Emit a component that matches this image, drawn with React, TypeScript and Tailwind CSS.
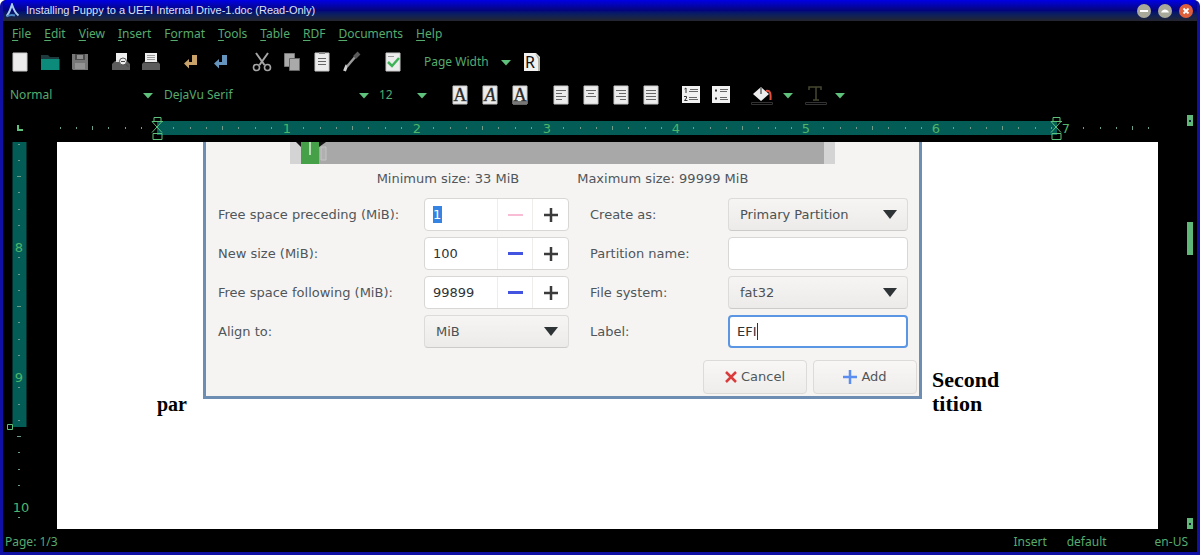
import type { ReactNode } from 'react';

const INCH = 130;

const menus = ['File', 'Edit', 'View', 'Insert', 'Format', 'Tools', 'Table', 'RDF', 'Documents', 'Help'];

const Caret = () => (
  <svg width="10" height="6" viewBox="0 0 10 6" className="pointer-events-none absolute right-[3px] top-1/2 -mt-[2px]">
    <path d="M0 0h10L5 5.500z" fill="#5fc27c" />
  </svg>
);

const ToolSelect = ({ label, value, className }: { label: string; value: string; className: string }) => (
  <div className={`relative shrink-0 ${className}`}>
    <select
      aria-label={label}
      defaultValue={value}
      className="h-6 w-full appearance-none bg-transparent text-[#56ab6e] focus:outline-none"
    >
      <option>{value}</option>
    </select>
    <Caret />
  </div>
);

const Tool = ({ label, children }: { label: string; children: ReactNode }) => (
  <button type="button" aria-label={label} className="flex h-7 w-[30px] shrink-0 items-center justify-center">
    <svg width="22" height="22" viewBox="0 0 22 22" fill="none">
      {children}
    </svg>
  </button>
);

const Sheet = () => <path d="M4 2h14v18H4z" fill="#ececec" stroke="#c9c9c9" />;

const Lines = ({ rows }: { rows: number[][] }) => (
  <>
    {rows.map(([x1, x2, y]) => (
      <path key={y} d={`M${x1} ${y}.5H${x2}`} stroke="#666" />
    ))}
  </>
);

const TitleBar = () => (
  <header className="flex h-[21px] items-center bg-linear-to-b from-[#0000e6] via-[#04047c] to-[#25252f] px-[2px]">
    <svg width="15" height="15" viewBox="0 0 15 15" fill="none">
      <path d="M1.500 13C4.500 10 5.500 5.500 7 1.500c1.500 4.500 3 8.500 6.500 11" stroke="#a9cdf0" strokeWidth="2" />
      <path d="M1.500 13.500c3.500-2 6-2 8.500-1" stroke="#4b86c5" strokeWidth="2" />
    </svg>
    <h1 className="ml-[6px] flex-1 truncate font-['Liberation_Sans',sans-serif] text-[11px] text-[#dfe2f5]">
      Installing Puppy to a UEFI Internal Drive-1.doc (Read-Only)
    </h1>
    <div className="mr-[2px] flex gap-[7px]">
      <button type="button" aria-label="Minimize">
        <svg width="14" height="14" viewBox="0 0 14 14">
          <circle cx="7" cy="7" r="7" fill="#a9a999" />
          <path d="M3 7h8" stroke="#fff" strokeWidth="2" />
        </svg>
      </button>
      <button type="button" aria-label="Maximize">
        <svg width="14" height="14" viewBox="0 0 14 14">
          <circle cx="7" cy="7" r="7" fill="#a9a999" />
          <path d="M3 8.500C4.500 4.500 9.500 4.500 11 8.500z" fill="#fff" />
        </svg>
      </button>
      <button type="button" aria-label="Close">
        <svg width="14" height="14" viewBox="0 0 14 14">
          <circle cx="7" cy="7" r="7" fill="#de5f3c" />
          <path d="M4.500 4.500l5 5m0-5l-5 5" stroke="#fff" strokeWidth="1.800" />
        </svg>
      </button>
    </div>
  </header>
);

const MenuBar = () => (
  <nav className="flex h-[25px] items-center gap-[13px] pl-[9px]">
    {menus.map((menu) => {
      const key = menu === 'Format' ? 1 : 0;
      return (
        <button key={menu} type="button">
          {menu.slice(0, key)}
          <span className="underline underline-offset-2">{menu[key]}</span>
          {menu.slice(key + 1)}
        </button>
      );
    })}
  </nav>
);

const StandardBar = () => (
  <div className="flex h-8 items-center pl-[2px]">
    <Tool label="New">
      <Sheet />
    </Tool>
    <Tool label="Open">
      <path d="M2 4h7l2 2h9v4H2z" fill="#1d3b3f" />
      <path d="M2 8h18.500v11H2z" fill="#0c8a7a" />
    </Tool>
    <Tool label="Save">
      <path d="M3 3h16v16H4l-1-1z" fill="#777" />
      <path d="M6 3h10v6H6z" fill="#4d4d4d" />
      <path d="M8 4h6v4H8z" fill="#8f8f8f" />
      <path d="M6 12h10v6H6z" fill="#939393" />
    </Tool>
    <div className="w-[11px]" />
    <Tool label="Print preview">
      <path d="M6 2h11v10H6z" fill="#eee" />
      <path d="M2 19v-6l3-3h12l3 3v6z" fill="#5c5c5c" />
      <path d="M6 9h11v2H6z" fill="#ddd" />
      <circle cx="13" cy="10.500" r="3.500" fill="#eee" stroke="#555" />
      <path d="M11 10.500h4M15.500 13l3 3" stroke="#444" />
    </Tool>
    <Tool label="Print">
      <path d="M2 19v-6l3-3h12l3 3v6z" fill="#5c5c5c" />
      <path d="M5 2h12v9H5z" fill="#eee" />
      <path d="M7 4.500h8M7 6.500h8M7 8.500h8" stroke="#999" />
      <path d="M4 11.500h14" stroke="#333" />
    </Tool>
    <div className="w-[10px]" />
    <Tool label="Undo">
      <path d="M12 4h5v10H9v3.500L4 12.500l5-4.500v3h3z" fill="#c9a26a" />
    </Tool>
    <Tool label="Redo">
      <path d="M12 4h5v10H9v3.500L4 12.500l5-4.500v3h3z" fill="#6594bf" />
    </Tool>
    <div className="w-[11px]" />
    <Tool label="Cut">
      <path d="M5 2l8.500 12M17 2L8.500 14" stroke="#a5a5a5" strokeWidth="2" />
      <circle cx="5.500" cy="16.500" r="3" stroke="#a5a5a5" strokeWidth="1.600" />
      <circle cx="16.500" cy="16.500" r="3" stroke="#a5a5a5" strokeWidth="1.600" />
    </Tool>
    <Tool label="Copy">
      <path d="M3.500 2.500h10v13h-10z" fill="#aaa" stroke="#777" />
      <path d="M8.500 7.500h10v12h-10z" fill="#aaa" stroke="#666" />
    </Tool>
    <Tool label="Paste">
      <Sheet />
      <path d="M8 2h6" stroke="#888" strokeWidth="2" />
      <Lines rows={[[7, 15, 7], [7, 15, 10], [7, 15, 13]]} />
    </Tool>
    <Tool label="Format painter">
      <path d="M3.500 20L6 14" stroke="#cfcfcf" strokeWidth="3" />
      <path d="M6 15.500L15 5" stroke="#9a9a9a" strokeWidth="2.500" />
      <path d="M13.500 6.500L18 2" stroke="#5a5a5a" strokeWidth="4" />
    </Tool>
    <div className="w-[11px]" />
    <Tool label="Spelling">
      <Sheet />
      <path d="M6 5.500h6" stroke="#999" />
      <path d="M6 11l4 4 7-8" stroke="#3fb258" strokeWidth="2.500" />
    </Tool>
    <ToolSelect label="Zoom" value="Page Width" className="ml-4 w-[90px]" />
    <div className="w-[3px]" />
    <Tool label="Revisions">
      <path d="M3 2h12l4 4v14H3z" fill="#f1f1f1" />
      <path d="M14 2l5 5v13h-2V8z" fill="#b5b5a8" />
      <text x="4" y="17" fontSize="16" fill="#111" fontFamily="Noto Sans, sans-serif">
        R
      </text>
    </Tool>
  </div>
);

const Letter = ({ italic }: { italic?: boolean }) => (
  <text
    x="11"
    y="17"
    fontSize="18"
    textAnchor="middle"
    fill="#222"
    stroke="#444"
    strokeWidth="0.400"
    fontStyle={italic ? 'italic' : 'normal'}
    fontFamily="Liberation Serif, serif"
  >
    A
  </text>
);

const FormatBar = () => (
  <div className="flex h-[34px] items-center pl-[7px]">
    <ToolSelect label="Style" value="Normal" className="w-[146px]" />
    <ToolSelect label="Font" value="DejaVu Serif" className="ml-2 w-[208px]" />
    <ToolSelect label="Size" value="12" className="ml-[7px] w-[51px]" />
    <div className="w-[15px]" />
    <Tool label="Bold">
      <Sheet />
      <Letter />
    </Tool>
    <Tool label="Italic">
      <Sheet />
      <Letter italic />
    </Tool>
    <Tool label="Underline">
      <Sheet />
      <path d="M4 18.500h14" stroke="#777" strokeWidth="3" />
      <Letter />
    </Tool>
    <div className="w-[11px]" />
    <Tool label="Align left">
      <Sheet />
      <Lines rows={[[6, 16, 6], [6, 12, 9], [6, 16, 12], [6, 12, 15]]} />
    </Tool>
    <Tool label="Align center">
      <Sheet />
      <Lines rows={[[6, 16, 6], [8, 14, 9], [6, 16, 12]]} />
    </Tool>
    <Tool label="Align right">
      <Sheet />
      <Lines rows={[[6, 16, 6], [9, 16, 9], [6, 16, 12], [10, 16, 15]]} />
    </Tool>
    <Tool label="Justify">
      <Sheet />
      <Lines rows={[[6, 16, 6], [6, 16, 9], [6, 16, 12], [6, 16, 15]]} />
    </Tool>
    <div className="w-[10px]" />
    <Tool label="Numbering">
      <path d="M2 2h18v17H2z" fill="#f1f1f1" />
      <path d="M4.500 5l1.500-1v5" stroke="#333" />
      <path d="M4 12.500h2.500v1.500L4.500 16.500H7.500" stroke="#333" />
      <Lines rows={[[10, 18, 5], [9, 18, 7], [9, 17, 13], [9, 18, 15]]} />
    </Tool>
    <Tool label="Bullets">
      <path d="M2 2h18v17H2z" fill="#f1f1f1" />
      <path d="M5 6.500h2M5 14.500h2" stroke="#333" strokeWidth="2" />
      <Lines rows={[[10, 18, 5], [10, 17, 7], [10, 17, 13], [10, 18, 15]]} />
    </Tool>
    <div className="w-[11px]" />
    <Tool label="Highlight">
      <path d="M2 10l8-7 8 7-8 7z" fill="#eee" />
      <path d="M10 3v7" stroke="#666" strokeWidth="1.500" />
      <path d="M15 7c4-1 5 2 4.500 9" stroke="#e2503f" strokeWidth="2" />
      <path d="M.500 18.500h21v2H.500z" stroke="#333" />
    </Tool>
    <button type="button" aria-label="Highlight color" className="relative h-6 w-[19px]">
      <Caret />
    </button>
    <div className="w-[5px]" />
    <Tool label="Text color">
      <path d="M4 6V3h12v3M11 3v13M8 16h6" stroke="#47472f" strokeWidth="1.500" />
      <path d="M.500 18.500h21v2H.500z" stroke="#333" />
    </Tool>
    <button type="button" aria-label="Text color options" className="relative h-6 w-[17px]">
      <Caret />
    </button>
  </div>
);

const IndentMarker = ({ x }: { x: number }) => (
  <g stroke="#5fc27c">
    <path d={`M${x - 3} 5.500h7v4h-7z`} />
    <path d={`M${x - 5} 9.500h11M${x - 5} 9.500l10 11M${x + 5} 9.500l-10 11`} />
    <path d={`M${x - 4} 21.500h9v6h-9z`} />
  </g>
);

const HorizontalRuler = () => {
  const ticks = Array.from({ length: 68 }, (_, i) => i - 6).filter((t) => t % 8 !== 0);
  return (
    <div className="flex h-[30px] shrink-0">
      <svg width="54" height="30" className="shrink-0" fill="none">
        <path d="M15 13v5h5" stroke="#5fc27c" strokeWidth="2" />
      </svg>
      <div className="h-[30px] flex-1 overflow-hidden">
        <svg width="1101" height="30" fill="none">
          <path d="M100 9h900v14H100z" fill="#035c56" />
          {ticks.map((t) => {
            const x = 100 + Math.round((t * INCH) / 8);
            const half = t % 4 === 0 ? 2 : 1;
            return <path key={t} d={`M${x}.500 ${16 - half}v${half * 2}`} stroke="#6f9f8c" />;
          })}
          {[1, 2, 3, 4, 5, 6, 7].map((n) => (
            <text
              key={n}
              x={100 + n * INCH - Math.floor(n / 4)}
              y="21"
              fontSize="13"
              textAnchor="middle"
              fill="#4fb56b"
              fontFamily="DejaVu Sans, sans-serif"
            >
              {n}
            </text>
          ))}
          <IndentMarker x={100} />
          <IndentMarker x={999} />
        </svg>
      </div>
      <div className="flex w-[39px] items-start justify-end pr-1 pt-[3px]">
        <ScrollButton label="Scroll up" />
      </div>
    </div>
  );
};

const VerticalRuler = () => {
  const ticks = Array.from({ length: 24 }, (_, i) => i - 6).filter((t) => t % 8 !== 0);
  return (
    <svg width="54" height="387" className="shrink-0" fill="none">
      <path d="M9.500 0h14v285h-14z" fill="#035c56" />
      {ticks.map((t) => {
        const y = 99 + Math.round((t * INCH) / 8);
        const half = t % 4 === 0 ? 2 : 1;
        return <path key={t} d={`M${16 - half} ${y}.500h${half * 2}`} stroke="#6f9f8c" />;
      })}
      {[8, 9, 10].map((n) => (
        <text
          key={n}
          x={n === 10 ? 18 : 16}
          y={110 + (n - 8) * INCH}
          fontSize="13"
          textAnchor="middle"
          fill="#4fb56b"
          fontFamily="DejaVu Sans, sans-serif"
        >
          {n}
        </text>
      ))}
      <path d="M4.500 282.500h5v5h-5z" fill="#000" stroke="#5fc27c" />
    </svg>
  );
};

const ScrollButton = ({ label }: { label: string }) => (
  <button type="button" aria-label={label} className="flex h-[11px] w-[6px] items-center justify-center bg-[#5fb878]">
    <span className="h-[2px] w-[2px] bg-[#123]" />
  </button>
);

const SpinField = ({ id, value, first }: { id: string; value: string; first?: boolean }) => (
  <div className="flex h-[33px] items-stretch rounded border border-[#d9d7d5] bg-white">
    <div className="flex flex-1 items-center pl-2">
      <input
        id={id}
        defaultValue={value}
        className={
          first
            ? 'h-[17px] w-[9px] bg-[#3584e4] text-white focus:outline-none'
            : 'w-14 text-[#2e3436] focus:outline-none'
        }
      />
    </div>
    <button type="button" aria-label="Decrease" className="flex w-[35px] items-center justify-center border-l border-[#eeedec]">
      <span className={first ? 'h-[2px] w-[15px] bg-[#f9bcd5]' : 'h-[3px] w-[15px] bg-[#4355e0]'} />
    </button>
    <button type="button" aria-label="Increase" className="flex w-[36px] items-center justify-center border-l border-[#eeedec]">
      <svg width="14" height="14" viewBox="0 0 14 14">
        <path d="M0 7h14M7 0v14" stroke="#3b3b3b" strokeWidth="2.500" />
      </svg>
    </button>
  </div>
);

const DialogSelect = ({ id, value }: { id: string; value: string }) => (
  <div className="relative">
    <select
      id={id}
      defaultValue={value}
      className="h-[33px] w-full appearance-none rounded border border-[#dddad7] border-b-[#cdcac7] bg-linear-to-b from-[#f6f5f4] to-[#edebe9] pl-[11px] text-[#4c5153]"
    >
      <option>{value}</option>
    </select>
    <svg width="14" height="9" viewBox="0 0 14 9" className="pointer-events-none absolute right-[11px] top-3">
      <path d="M0 0h14L7 9z" fill="#2e3436" />
    </svg>
  </div>
);

const PartitionDialog = () => (
  <form className="mb-[17px] flex min-w-0 flex-1 flex-col border-x-[3px] border-b-[3px] border-[#6d8db3] bg-[#f5f4f3] font-['DejaVu_Sans',sans-serif] text-[13px] font-normal text-[#50565a]">
    <div className="mx-[84px] flex h-[22px] bg-[#d4d4d4] pr-[11px]">
      <svg width="40" height="22" viewBox="0 0 40 22" className="shrink-0">
        <path d="M29 0h11v22H29z" fill="#a8a8a8" />
        <path d="M6 0h24l-6 5H11z" fill="#111" />
        <path d="M11 0h18v22H11z" fill="#45a047" />
        <path d="M20 0v13" stroke="#d8efd8" strokeWidth="1.500" />
        <path d="M31 5h5v13h-5z" fill="#b0b0b0" stroke="#c4c4c4" />
        <path d="M29 0h7l-7 5z" fill="#111" />
      </svg>
      <div className="flex-1 bg-[#a8a8a8]" />
    </div>
    <div className="flex h-[34px] items-center justify-center gap-[58px] pb-1">
      <span>Minimum size: 33 MiB</span>
      <span>Maximum size: 99999 MiB</span>
    </div>
    <div className="grid grid-cols-[206px_145fr_159px_180fr] items-center gap-y-[6px] pl-3 pr-[11px]">
      <label htmlFor="preceding">Free space preceding (MiB):</label>
      <SpinField id="preceding" value="1" first />
      <label htmlFor="create" className="pl-[21px]">Create as:</label>
      <DialogSelect id="create" value="Primary Partition" />

      <label htmlFor="size">New size (MiB):</label>
      <SpinField id="size" value="100" />
      <label htmlFor="name" className="pl-[21px]">Partition name:</label>
      <input id="name" className="h-[33px] w-full min-w-0 rounded border border-[#d9d7d5] bg-white px-2" />

      <label htmlFor="following">Free space following (MiB):</label>
      <SpinField id="following" value="99899" />
      <label htmlFor="fs" className="pl-[21px]">File system:</label>
      <DialogSelect id="fs" value="fat32" />

      <label htmlFor="align">Align to:</label>
      <DialogSelect id="align" value="MiB" />
      <label htmlFor="label" className="pl-[21px]">Label:</label>
      <div className="flex h-[33px] items-center rounded border-2 border-[#5a96e3] bg-white pl-[7px]">
        <input id="label" defaultValue="EFI" className="field-sizing-content text-[#2e3436] focus:outline-none" />
        <span className="h-[17px] w-px bg-[#2e3436]" />
      </div>
    </div>
    <div className="mt-3 flex justify-end gap-[6px] pb-[2px] pr-[2px]">
      <button
        type="button"
        className="flex h-[34px] w-[104px] items-center justify-center gap-1 rounded border border-[#dddad7] bg-linear-to-b from-[#f8f7f6] to-[#efedec]"
      >
        <svg width="12" height="12" viewBox="0 0 12 12">
          <path d="M1 1l10 10M11 1L1 11" stroke="#dc3b3b" strokeWidth="2.500" />
        </svg>
        Cancel
      </button>
      <button
        type="button"
        className="flex h-[34px] w-[104px] items-center justify-center gap-1 rounded border border-[#dddad7] bg-linear-to-b from-[#f8f7f6] to-[#efedec]"
      >
        <svg width="14" height="14" viewBox="0 0 14 14">
          <path d="M0 7h14M7 0v14" stroke="#5b8df0" strokeWidth="2.500" />
        </svg>
        Add
      </button>
    </div>
  </form>
);

const Page = () => (
  <main className="min-w-0 flex-1 overflow-hidden bg-white">
    <div className="flex items-end pl-[100px] font-['Liberation_Serif',serif] font-bold text-black">
      <p className="w-[46px] shrink-0 text-xl leading-6">par</p>
      <PartitionDialog />
      <p className="w-[236px] shrink-0 pl-[10px] text-[22px] leading-6">
        Second
        <br />
        tition
      </p>
    </div>
  </main>
);

const App = () => {
  return (
    <div className="flex min-h-screen flex-col overflow-hidden rounded-t-md border-x-[3px] border-b-[3px] border-[#1010a4] bg-black font-['Noto_Sans',sans-serif] text-xs text-[#56ab6e]">
      <TitleBar />
      <MenuBar />
      <StandardBar />
      <FormatBar />
      <HorizontalRuler />
      <div className="flex flex-1">
        <VerticalRuler />
        <Page />
        <div className="flex w-[39px] flex-col items-end pr-1">
          <div className="mt-20 h-[33px] w-[6px] bg-[#5fb878]" />
          <div className="flex-1" />
          <ScrollButton label="Scroll down" />
        </div>
      </div>
      <footer className="flex h-[23px] items-center gap-5 pl-[2px] pr-[9px] pt-[2px]">
        <span className="flex-1">Page: 1/3</span>
        <span>Insert</span>
        <span>default</span>
        <span className="ml-7">en-US</span>
      </footer>
    </div>
  );
};

export default App;
